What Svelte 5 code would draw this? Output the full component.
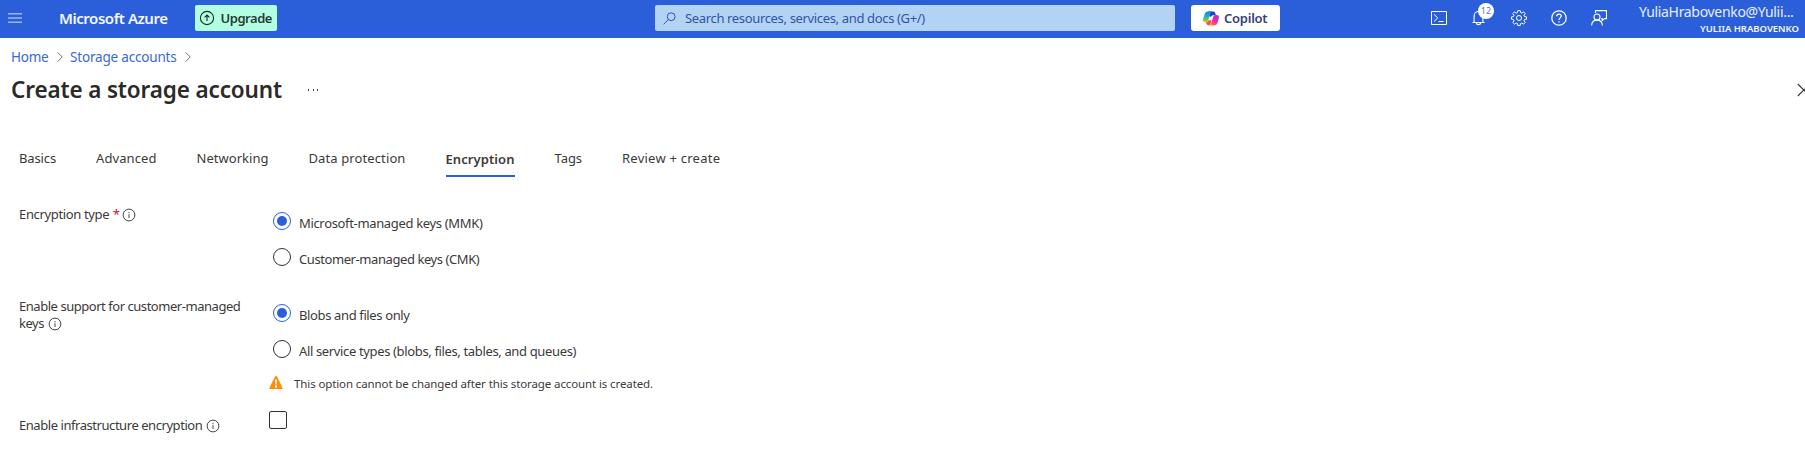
<script>
  const tabs = [
    { label: 'Basics', ls: -0.132 },
    { label: 'Advanced', ls: 0.087 },
    { label: 'Networking', ls: 0.032 },
    { label: 'Data protection', ls: 0.111 },
    { label: 'Encryption', ls: 0.075, active: true },
    { label: 'Tags', ls: -0.051 },
    { label: 'Review + create', ls: 0.24 }
  ];
  const encryptionTypes = [
    { label: 'Microsoft-managed keys (MMK)', ls: -0.34, checked: true },
    { label: 'Customer-managed keys (CMK)', ls: -0.42 }
  ];
  const supportScopes = [
    { label: 'Blobs and files only', ls: -0.37, checked: true },
    { label: 'All service types (blobs, files, tables, and queues)', ls: -0.357 }
  ];
</script>

{#snippet info()}
  <svg class="info" width="14" height="14" viewBox="0 0 14 14" fill="none" stroke="#444" stroke-width="1">
    <circle cx="7" cy="7" r="5.900" />
    <path d="M7 6.200V10M7 4v1.200" />
  </svg>
{/snippet}

{#snippet chevron()}
  <svg class="chevron" width="6" height="10" viewBox="0 0 6 10" fill="none" stroke="#7a7a7a"><path d="M.5 .3L5.200 5L.5 9.700" /></svg>
{/snippet}

{#snippet radios(items)}
  {#each items as o}
    <div class="option">
      <span class="radio" class:checked={o.checked}></span>
      <span class="option-label" style="letter-spacing:{o.ls}px">{o.label}</span>
    </div>
  {/each}
{/snippet}

<div class="page">
  <header>
    <svg class="menu" width="14" height="10" viewBox="0 0 14 10" stroke="#9ab6f0" stroke-width="1.600"><path d="M0 .8h14M0 5h14M0 9.200h14" /></svg>
    <span class="brand">Microsoft Azure</span>
    <div class="upgrade">
      <svg width="16" height="16" viewBox="0 0 16 16" fill="none" stroke="#1b2b2a" stroke-width="1.100"><circle cx="8" cy="8" r="6.600" /><path d="M8 11V5.200M5.600 7.400L8 5l2.400 2.400" /></svg>
      <span>Upgrade</span>
    </div>
    <div class="search">
      <svg width="13" height="13" viewBox="0 0 13 13" fill="none" stroke="#2f55a8" stroke-width="1"><circle cx="8.200" cy="4.700" r="3.900" /><path d="M5.400 7.500L.5 12.400" /></svg>
      <span>Search resources, services, and docs (G+/)</span>
    </div>
    <div class="copilot">
      <svg width="16" height="15" viewBox="0 0 16 15">
        <defs>
          <linearGradient id="cool" x1="0" y1="0" x2="0" y2="1">
            <stop offset="0" stop-color="#1b7fe8" /><stop offset=".45" stop-color="#1fb5c4" /><stop offset=".75" stop-color="#6cc63a" /><stop offset="1" stop-color="#f2cf1c" />
          </linearGradient>
          <linearGradient id="warm" x1=".8" y1="0" x2=".2" y2="1">
            <stop offset="0" stop-color="#9a3bea" /><stop offset=".45" stop-color="#ee1fae" /><stop offset="1" stop-color="#ff7a3c" />
          </linearGradient>
        </defs>
        <path fill="#1648c4" d="M5 .6H10.300C11.600 .6 12 1.500 12.300 2.600L12.900 4.300H10C8.800 4.300 8.400 5 8 6L6 5Z" />
        <path fill="url(#cool)" d="M5 .6H9.200C8 .6 7.500 2 7.100 3.200L5.200 9.600C4.800 10.800 4.200 11.200 3 11.200H2.200C.2 11.200-.3 9.500.2 7.800L1.500 3.500C2.100 1.600 3.200.6 5 .6Z" />
        <path fill="#ff4f58" d="M2.800 11.100C4.300 11.300 5 10.500 5.400 9.300L8.600 9.300L7.600 12.600C7.200 13.800 6.600 14.400 5.400 14.400C3.900 14.400 3.400 12.900 2.800 11.100Z" />
        <path fill="url(#warm)" d="M11 14.400H5.800C7.400 14.400 8 13 8.400 11.800L10.300 5.700C10.700 4.500 11.400 4 12.500 4H13.800C15.800 4 16.300 5.500 15.800 7.200L14.500 11.500C13.900 13.400 12.800 14.400 11 14.400Z" />
      </svg>
      <span>Copilot</span>
    </div>
    <nav class="tools">
      <svg width="16" height="16" viewBox="0 0 16 16" fill="none" stroke="#fff"><path d="M.5 1.500h15v13H.5zM3 4.300L6.700 7.900L3 11.500M7.500 11.500h5" /></svg>
      <div class="bell">
        <svg width="16" height="16" viewBox="0 0 16 16" fill="none" stroke="#fff" stroke-width="1.100"><path d="M1.500 12.500h12M3.100 12.500V6.200C3.100 3.400 5 1.500 7.500 1.500s4.400 1.900 4.400 4.700v6.300M5.500 12.700c0 2.600 4 2.600 4 0" /></svg>
        <span class="badge">12</span>
      </div>
      <svg width="16" height="16" viewBox="0 0 16 16" fill="none" stroke="#fff" stroke-linejoin="round"><path d="M6.800 .6h2.400l.4 2 1.200.5 1.700-1.200 1.700 1.700-1.200 1.700.5 1.200 2 .4v2.300l-2 .4-.5 1.200 1.200 1.700-1.700 1.700-1.700-1.200-1.200.5-.4 2H6.800l-.4-2-1.200-.5-1.700 1.200-1.700-1.700L3 10.800l-.5-1.200-2-.4V6.900l2-.4L3 5.300 1.800 3.600l1.700-1.700 1.700 1.200 1.200-.5z" /><circle cx="8" cy="8" r="2.500" /></svg>
      <svg width="16" height="16" viewBox="0 0 16 16" fill="none" stroke="#fff" stroke-width="1.300"><circle cx="8" cy="8" r="7.200" /><path d="M5.700 6.300C5.700 3.300 10.300 3.400 10.300 6.100C10.300 7.800 8 8 8 10M8 11.200v1.300" /></svg>
      <svg width="16" height="16" viewBox="0 0 16 16" fill="none" stroke="#fff" stroke-width="1.100"><path d="M4.500 3V.6h11v8h-2l-2.300 2V8.600h-1" /><circle cx="6" cy="7" r="3" /><path d="M.6 15.500C.8 12 3 10.100 6 10.100s5.200 1.900 5.400 5.400" /></svg>
    </nav>
    <div class="account">
      <span class="mail">YuliaHrabovenko@Yulii...</span>
      <span class="tenant">YULIIA HRABOVENKO</span>
    </div>
  </header>

  <div class="crumbs">
    <a class="home" href="#home">Home</a>{@render chevron()}<a class="storage" href="#storage">Storage accounts</a>{@render chevron()}
  </div>

  <div class="title-row">
    <h1>Create a storage account</h1>
    <span class="more"><i></i><i></i><i></i></span>
    <svg class="close" width="8" height="14" viewBox="0 0 8 14" fill="none" stroke="#333" stroke-width="1.100"><path d="M.8 1L12.800 13M.8 13L12.800 1" /></svg>
  </div>

  <div class="tabs">
    {#each tabs as t}
      <span class="tab" class:active={t.active} style="letter-spacing:{t.ls}px">{t.label}</span>
    {/each}
  </div>

  <div class="form">
    <div class="row first">
      <div class="label"><span class="l1">Encryption type</span><span class="star">*</span>{@render info()}</div>
      <div class="field">{@render radios(encryptionTypes)}</div>
    </div>
    <div class="row second">
      <div class="label"><span class="l2">Enable support for customer-managed</span><span class="l2">keys</span>{@render info()}</div>
      <div class="field">
        {@render radios(supportScopes)}
        <div class="warning">
          <svg width="14" height="13" viewBox="0 0 14 13"><path fill="#ff8c0a" d="M6 .6Q7 -.6 8 .6L13.600 12Q13.700 13 13 13H1Q.3 13 .4 12Z" /><path fill="#fff" d="M6 3.500h2l-.4 5H6.400zM6 9.600h2v1.800H6z" /></svg>
          <span>This option cannot be changed after this storage account is created.</span>
        </div>
      </div>
    </div>
    <div class="row third">
      <div class="label"><span class="l3">Enable infrastructure encryption</span>{@render info()}</div>
      <div class="field"><span class="checkbox"></span></div>
    </div>
  </div>
</div>

<style>
  :global(body) { margin: 0; background: #fff; }
  .page { width: 1805px; height: 463px; overflow: hidden; font: 13px/20px "Noto Sans", sans-serif; color: #3b3a39; white-space: nowrap; }
  .page * { box-sizing: border-box; }
  svg { display: block; flex: none; }
  header { display: flex; align-items: flex-start; height: 38px; padding: 5px 6px 0 8px; background: #2b5fd9; }
  .menu { margin-top: 8px; }
  .brand { width: 111px; margin-left: 37px; font-size: 15px; font-weight: 600; line-height: 26px; letter-spacing: -0.45px; color: #f3f7ff; }
  .upgrade { display: flex; align-items: center; width: 82px; height: 26px; margin-left: 25px; padding-left: 4px; gap: 5.500px; border-radius: 2px; background: #b2fee3; color: #2a3b39; font-weight: 600; letter-spacing: -0.46px; }
  .search { display: flex; align-items: center; width: 520px; height: 26px; margin-left: 378px; padding-left: 8px; gap: 9px; border-radius: 2px; background: #b3d3f5; color: #2f55a3; letter-spacing: -0.345px; }
  .copilot { display: flex; align-items: center; width: 89px; height: 26px; margin-left: 16px; padding-left: 12px; gap: 5px; border-radius: 3px; background: #fff; color: #34407a; font-weight: 600; letter-spacing: -0.25px; }
  .tools { display: flex; gap: 24px; margin: 5px 0 0 151px; }
  .bell { position: relative; width: 16px; }
  .badge { position: absolute; left: 7px; top: -7px; width: 16px; height: 16px; border-radius: 50%; background: #fff; color: #4a75dc; font-size: 9px; line-height: 16px; text-align: center; }
  .account { flex: 1; display: flex; flex-direction: column; align-items: flex-end; color: #f3f7ff; }
  .mail { margin: -3px 5.500px 0 0; font-size: 14px; line-height: 20px; letter-spacing: -0.32px; color: #e6eefc; }
  .tenant { margin-top: -1px; font-size: 9.500px; font-weight: 600; line-height: 15px; letter-spacing: -0.03px; }
  .crumbs { display: flex; align-items: center; height: 20px; margin: 9px 0 0 11px; font-size: 13.500px; }
  .crumbs a { color: #3a68da; text-decoration: none; }
  .home { width: 46px; letter-spacing: -0.25px; }
  .storage { width: 115px; margin-left: 7px; letter-spacing: -0.18px; }
  .chevron { margin-top: 0; }
  .title-row { display: flex; align-items: center; height: 30px; margin: 8px 0 0 11px; }
  h1 { width: 297px; margin: 0; font-size: 22.500px; line-height: 30px; font-weight: 600; letter-spacing: -0.138px; color: #2b2a29; }
  .more { display: flex; gap: 3.500px; margin-bottom: 1px; }
  .more i { width: 1px; height: 2px; background: #444; }
  .close { margin: 0 0 0 auto; }
  .tabs { display: flex; align-items: flex-start; gap: 40px; height: 29px; margin: 43px 0 0 19px; }
  .active { height: 29px; padding-top: 1px; border-bottom: 2px solid #2b5fd9; font-weight: 600; }
  .form { display: flex; flex-direction: column; padding: 29px 0 0 19px; }
  .row { display: grid; grid-template-columns: 250px 1fr; }
  .first { height: 92px; }
  .second { height: 113px; }
  .label { display: flex; flex-wrap: wrap; align-content: flex-start; width: 236px; line-height: 17px; }
  .info { margin: 2px 0 0 4px; }
  .l1 { letter-spacing: -0.35px; }
  .l2 { letter-spacing: -0.46px; }
  .l3 { letter-spacing: -0.445px; }
  .star { margin: 0 -2px 0 3.500px; color: #c50f3c; }
  .field { padding-top: 6px; }
  .option { display: flex; align-items: center; height: 18px; margin: 0 0 18px 4px; gap: 8px; }
  .option-label { margin-top: 4px; }
  .radio { display: grid; place-items: center; width: 18px; height: 18px; border: 1.400px solid #323130; border-radius: 50%; }
  .checked { border-color: #2b5fd9; }
  .checked::after { content: ''; width: 10px; height: 10px; border-radius: 50%; background: #2b5fd9; }
  .warning { display: flex; align-items: center; height: 17px; margin-top: -1px; gap: 11px; font-size: 11.500px; letter-spacing: -0.11px; }
  .warning svg { margin-top: -3px; }
  .third { padding-top: 6px; }
  .third .field { padding: 0; margin-top: -6px; }
  .checkbox { display: block; width: 18px; height: 18px; border: 1px solid #323130; border-radius: 2px; }
</style>
